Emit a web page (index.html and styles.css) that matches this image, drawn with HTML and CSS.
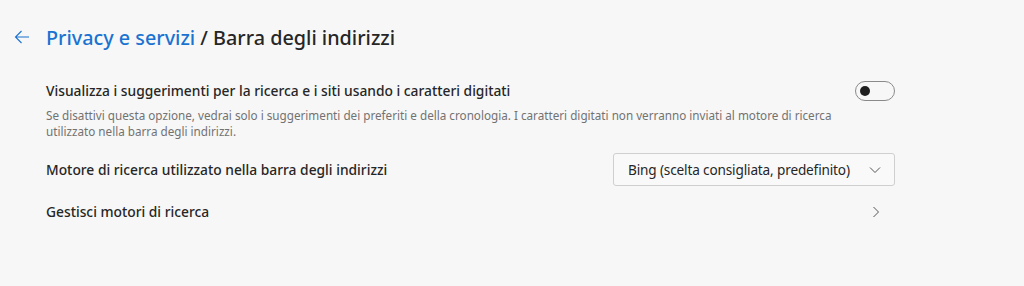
FILE: index.html
```html
<!DOCTYPE html>
<html lang="it">
<head>
<meta charset="utf-8">
<link rel="stylesheet" href="styles.css">
</head>
<body>
<div class="page">
  <div class="header">
    <span class="back">
      <svg width="16" height="16" viewBox="0 0 16 16"><path d="M15 8H1.5M7.5 2L1.5 8l6 6" fill="none" stroke="#1a73d1" stroke-width="1.1"/></svg>
    </span>
    <h1 class="title"><span class="crumb">Privacy e servizi</span> / Barra degli indirizzi</h1>
  </div>
  <div class="settings">
    <div class="row row-toggle">
      <div class="row-text">
        <div class="label">Visualizza i suggerimenti per la ricerca e i siti usando i caratteri digitati</div>
        <div class="desc">Se disattivi questa opzione, vedrai solo i suggerimenti dei preferiti e della cronologia. I caratteri digitati non verranno inviati al motore di ricerca utilizzato nella barra degli indirizzi.</div>
      </div>
      <div class="toggle"><span class="knob"></span></div>
    </div>
    <div class="row row-select">
      <div class="label">Motore di ricerca utilizzato nella barra degli indirizzi</div>
      <div class="select">
        <span>Bing (scelta consigliata, predefinito)</span>
        <svg width="12" height="12" viewBox="0 0 12 12"><path d="M1 3.5l5 5 5-5" fill="none" stroke="#555" stroke-width="1"/></svg>
      </div>
    </div>
    <div class="row row-link">
      <div class="label">Gestisci motori di ricerca</div>
      <svg class="chev" width="12" height="12" viewBox="0 0 12 12"><path d="M3.5 1l5 5-5 5" fill="none" stroke="#555" stroke-width="1"/></svg>
    </div>
  </div>
</div>
</body>
</html>
```

FILE: styles.css
```css
html, body {
  margin: 0;
  padding: 0;
  background: #f7f7f7;
}
body {
  font-family: "Segoe UI", "Noto Sans", "Open Sans", sans-serif;
  color: #262626;
}
.page {
  width: 1024px;
  height: 286px;
  box-sizing: border-box;
  padding: 22px 0 0 14px;
}
.header {
  display: flex;
  align-items: center;
  height: 30px;
}
.back {
  display: flex;
  width: 16px;
  height: 16px;
  margin-right: 16px;
}
.title {
  margin: 0;
  font-size: 19.8px;
  font-weight: 500;
  color: #262626;
}
.crumb {
  color: #1a73d1;
}
.settings {
  width: 849px;
  margin: 29px 0 0 32px;
}
.row {
  display: flex;
  align-items: center;
  justify-content: space-between;
}
.row-toggle {
  align-items: flex-start;
}
.label {
  font-size: 13.8px;
  font-weight: 500;
  line-height: 20px;
}
.desc {
  font-size: 11.7px;
  line-height: 16px;
  color: #727272;
  margin-top: 6px;
  width: 800px;
}
.toggle {
  width: 40px;
  height: 20px;
  box-sizing: border-box;
  border: 1px solid #8a8a8a;
  border-radius: 10px;
  display: flex;
  align-items: center;
  padding-left: 4px;
}
.knob {
  width: 10px;
  height: 10px;
  border-radius: 50%;
  background: #1f1f1f;
}
.row-select {
  margin-top: 14px;
}
.select {
  width: 282px;
  height: 33px;
  box-sizing: border-box;
  border: 1px solid #cfcfcf;
  border-radius: 3px;
  background: #f9f9f9;
  display: flex;
  align-items: center;
  justify-content: space-between;
  padding: 0 13px 0 14px;
  font-size: 13.6px;
  letter-spacing: -0.15px;
  color: #262626;
}
.row-link {
  margin-top: 8px;
  height: 36px;
}
.chev {
  margin-right: 13px;
}
```
